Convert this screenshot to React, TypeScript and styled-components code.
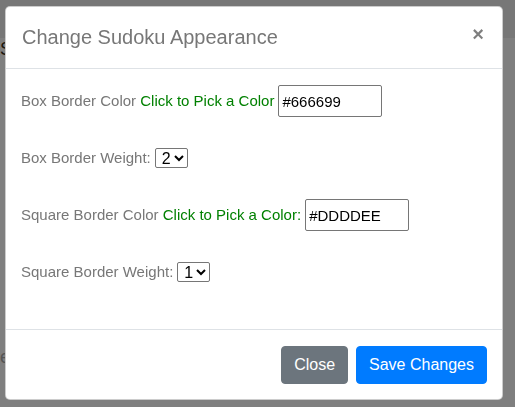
import React from 'react';
import styled, { createGlobalStyle } from 'styled-components';

const GlobalStyle = createGlobalStyle`
  html, body {
    margin: 0;
    padding: 0;
    background: #fff;
    font-family: "Liberation Sans", Arial, sans-serif;
    font-size: 16px;
    line-height: 1.5;
    color: #212529;
  }
  * {
    box-sizing: border-box;
  }
`

const Page = styled.div`
  width: 515px;
  height: 407px;
  overflow: hidden;
  background: #fff;
`

const Nav = styled.div`
  height: 38px;
  background: #eeeeee;
`

const PageMain = styled.div`
  display: flex;
  flex-direction: column;
  justify-content: space-between;
  height: 369px;
  padding: 0 0 40px 0;
`

const PageHeading = styled.div`
  font-size: 18px;
  line-height: 20px;
  color: #3a3020;
  margin-top: 1px;
`

const PageText = styled.div`
  font-size: 18px;
  line-height: 20px;
  color: #aaa;
`

const Backdrop = styled.div`
  position: fixed;
  inset: 0;
  background: rgba(0, 0, 0, 0.5);
  padding: 6px 0 0 5px;
`

const Dialog = styled.div`
  display: flex;
  flex-direction: column;
  width: 498px;
  height: 394px;
  background: #fff;
  border: 1px solid rgba(0, 0, 0, 0.2);
  border-radius: 5px;
`

const Header = styled.div`
  display: flex;
  align-items: flex-start;
  justify-content: space-between;
  padding: 16px;
  border-bottom: 1px solid #dee2e6;
`

const Title = styled.h5`
  margin: 0;
  font-size: 20px;
  font-weight: 400;
  line-height: 29px;
  color: #777;
`

const CloseX = styled.button`
  border: 0;
  background: transparent;
  padding: 0;
  margin: -1px 2px 0 0;
  font-family: "Liberation Sans", Arial, sans-serif;
  font-size: 20px;
  font-weight: 700;
  line-height: 24px;
  color: #000;
  opacity: 0.5;
  text-shadow: 0 1px 0 #fff;
  cursor: pointer;
`

const Body = styled.div`
  flex: 1;
  display: flex;
  flex-direction: column;
  gap: 25px;
  padding: 16px 16px 0 15px;
`

const Row = styled.div`
  display: flex;
  align-items: center;
  height: 32px;
  font-size: 15px;
  color: #777;
  white-space: pre;
`

const Pick = styled.span`
  color: #008000;
`

const ColorInput = styled.input`
  width: 104px;
  height: 32px;
  margin-left: 4px;
  padding: 0 3px;
  border: 1px solid #767676;
  border-radius: 2px;
  font-family: "Liberation Sans", Arial, sans-serif;
  font-size: 15px;
  color: #000;
  outline: none;
`

const Select = styled.select`
  width: 33px;
  height: 20px;
  margin-left: 4px;
  padding: 0 0 0 2px;
  font-family: "Liberation Sans", Arial, sans-serif;
  font-size: 16px;
  line-height: normal;
  color: #000;
  border: 1px solid #767676;
  border-radius: 2px;
  background: #fff;
`

const Footer = styled.div`
  display: flex;
  justify-content: flex-end;
  align-items: center;
  gap: 8px;
  padding: 16px 15px 15px 12px;
  border-top: 1px solid #dee2e6;
`

const Button = styled.button<{ $primary?: boolean }>`
  height: 38px;
  padding: 0 12px;
  border: 1px solid ${p => (p.$primary ? '#007bff' : '#6c757d')};
  border-radius: 4px;
  background: ${p => (p.$primary ? '#007bff' : '#6c757d')};
  color: #fff;
  font-family: "Liberation Sans", Arial, sans-serif;
  font-size: 16px;
  line-height: 24px;
  cursor: pointer;
`

const App = () => {
  return (
    <>
      <GlobalStyle />
      <Page>
        <Nav />
        <PageMain>
          <PageHeading>S</PageHeading>
          <PageText>e</PageText>
        </PageMain>
      </Page>
      <Backdrop>
        <Dialog>
          <Header>
            <Title>Change Sudoku Appearance</Title>
            <CloseX aria-label="Close">×</CloseX>
          </Header>
          <Body>
            <Row>
              Box Border Color <Pick>Click to Pick a Color</Pick>
              <ColorInput defaultValue="#666699" />
            </Row>
            <Row>
              Box Border Weight:
              <Select defaultValue="2">
                <option>1</option>
                <option>2</option>
                <option>3</option>
              </Select>
            </Row>
            <Row>
              Square Border Color <Pick>Click to Pick a Color:</Pick>
              <ColorInput defaultValue="#DDDDEE" />
            </Row>
            <Row>
              Square Border Weight:
              <Select defaultValue="1">
                <option>1</option>
                <option>2</option>
                <option>3</option>
              </Select>
            </Row>
          </Body>
          <Footer>
            <Button>Close</Button>
            <Button $primary>Save Changes</Button>
          </Footer>
        </Dialog>
      </Backdrop>
    </>
  );
};

export default App;
